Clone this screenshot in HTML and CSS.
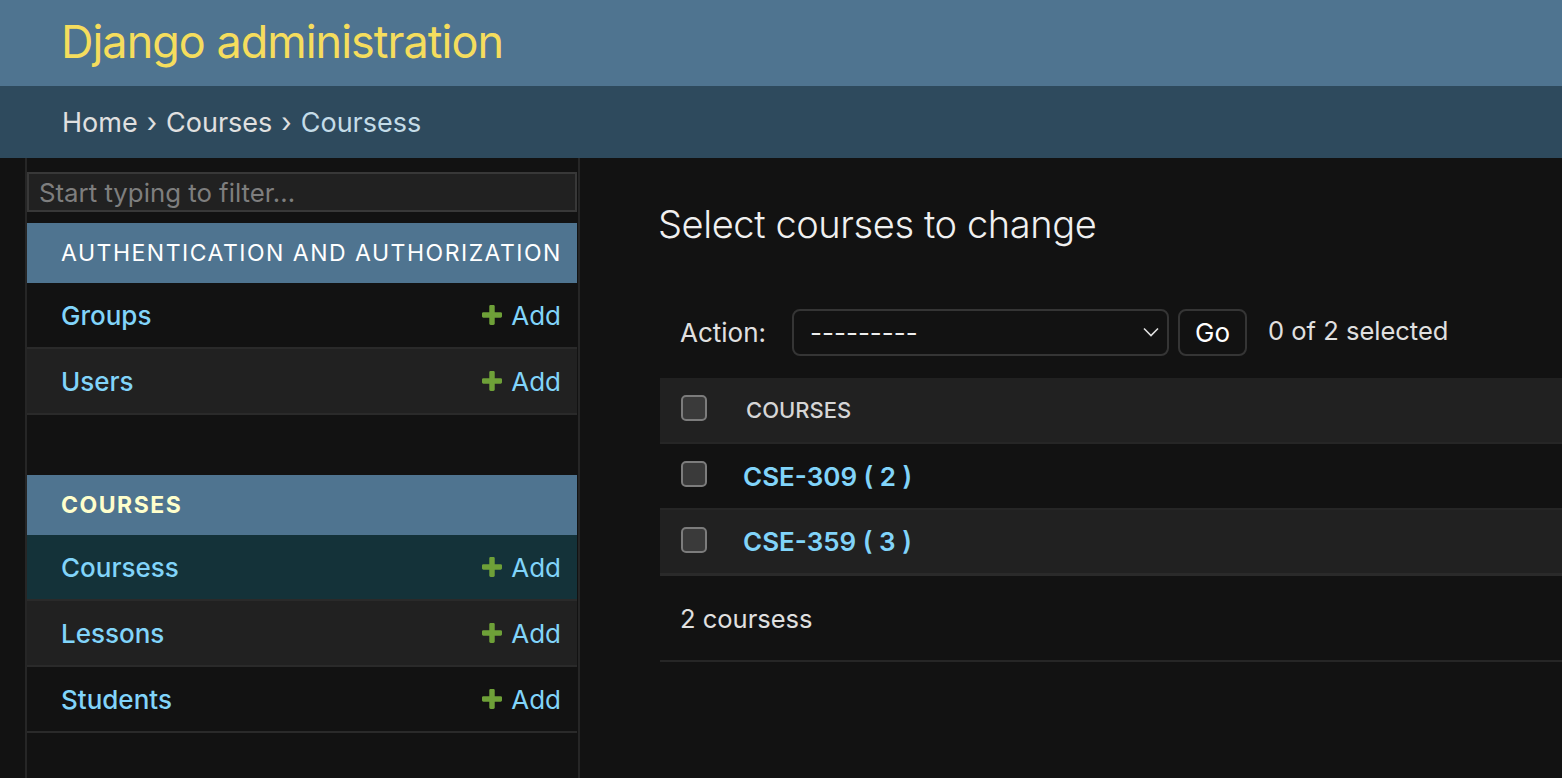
FILE: index.html
```html
<!DOCTYPE html>
<html lang="en">
<head>
<meta charset="utf-8">
<title>Select courses to change | Django site admin</title>
<link rel="stylesheet" href="styles.css">
</head>
<body>
<header class="site-header">
  <h1 class="branding">Django administration</h1>
</header>
<nav class="breadcrumbs">
  <a href="#" class="crumb-link">Home</a><span class="sep">›</span><a href="#" class="crumb-link">Courses</a><span class="sep">›</span><span class="crumb-current">Coursess</span>
</nav>
<div class="main">
  <div class="toggle-col"></div>
  <aside class="sidebar">
    <input class="filter" type="search" placeholder="Start typing to filter...">
    <section class="module">
      <div class="caption">Authentication and Authorization</div>
      <div class="row"><a class="model" href="#">Groups</a><a class="add" href="#"><svg class="plus" viewBox="192 192 1408 1408"><path d="M1600 796v192q0 40-28 68t-68 28h-416v416q0 40-28 68t-68 28h-192q-40 0-68-28t-28-68v-416h-416q-40 0-68-28t-28-68v-192q0-40 28-68t68-28h416v-416q0-40 28-68t68-28h192q40 0 68 28t28 68v416h416q40 0 68 28t28 68z"/></svg>Add</a></div>
      <div class="row alt"><a class="model" href="#">Users</a><a class="add" href="#"><svg class="plus" viewBox="192 192 1408 1408"><path d="M1600 796v192q0 40-28 68t-68 28h-416v416q0 40-28 68t-68 28h-192q-40 0-68-28t-28-68v-416h-416q-40 0-68-28t-28-68v-192q0-40 28-68t68-28h416v-416q0-40 28-68t68-28h192q40 0 68 28t28 68v416h416q40 0 68 28t28 68z"/></svg>Add</a></div>
    </section>
    <section class="module">
      <div class="caption current">Courses</div>
      <div class="row selected"><a class="model" href="#">Coursess</a><a class="add" href="#"><svg class="plus" viewBox="192 192 1408 1408"><path d="M1600 796v192q0 40-28 68t-68 28h-416v416q0 40-28 68t-68 28h-192q-40 0-68-28t-28-68v-416h-416q-40 0-68-28t-28-68v-192q0-40 28-68t68-28h416v-416q0-40 28-68t68-28h192q40 0 68 28t28 68v416h416q40 0 68 28t28 68z"/></svg>Add</a></div>
      <div class="row alt"><a class="model" href="#">Lessons</a><a class="add" href="#"><svg class="plus" viewBox="192 192 1408 1408"><path d="M1600 796v192q0 40-28 68t-68 28h-416v416q0 40-28 68t-68 28h-192q-40 0-68-28t-28-68v-416h-416q-40 0-68-28t-28-68v-192q0-40 28-68t68-28h416v-416q0-40 28-68t68-28h192q40 0 68 28t28 68v416h416q40 0 68 28t28 68z"/></svg>Add</a></div>
      <div class="row"><a class="model" href="#">Students</a><a class="add" href="#"><svg class="plus" viewBox="192 192 1408 1408"><path d="M1600 796v192q0 40-28 68t-68 28h-416v416q0 40-28 68t-68 28h-192q-40 0-68-28t-28-68v-416h-416q-40 0-68-28t-28-68v-192q0-40 28-68t68-28h416v-416q0-40 28-68t68-28h192q40 0 68 28t28 68v416h416q40 0 68 28t28 68z"/></svg>Add</a></div>
    </section>
  </aside>
  <main class="content">
    <h1 class="page-title">Select courses to change</h1>
    <div class="actions">
      <label class="action-label">Action:</label>
      <div class="select">
        <span class="select-value">---------</span>
        <svg class="chevron" viewBox="0 0 16 10"><path d="M1 1.5 L8 8.5 L15 1.5" fill="none" stroke="#e0e0e0" stroke-width="1.6"/></svg>
      </div>
      <button class="go" type="button">Go</button>
      <span class="counter">0 of 2 selected</span>
    </div>
    <div class="results">
      <div class="trow thead">
        <span class="cb-cell"><span class="checkbox"></span></span>
        <span class="col-title">Courses</span>
      </div>
      <div class="trow">
        <span class="cb-cell"><span class="checkbox"></span></span>
        <a class="item" href="#">CSE-309 ( 2 )</a>
      </div>
      <div class="trow alt last">
        <span class="cb-cell"><span class="checkbox"></span></span>
        <a class="item" href="#">CSE-359 ( 3 )</a>
      </div>
    </div>
    <p class="paginator">2 coursess</p>
  </main>
</div>
</body>
</html>
```

FILE: styles.css
```css
* { box-sizing: border-box; }

html, body {
  margin: 0;
  padding: 0;
  background: #121212;
  overflow: hidden;
}

body {
  font-family: Inter, "Noto Sans", "DejaVu Sans", sans-serif;
  color: #eeeeee;
  width: 1562px;
  height: 778px;
}

a { text-decoration: none; }

.site-header {
  height: 86px;
  background: #4f7490;
  display: flex;
  align-items: center;
  padding: 0 61px;
}

.branding {
  margin: 0;
  font-size: 45px;
  letter-spacing: -1px;
  font-weight: 400;
  color: #f5dd5d;
  line-height: 1;
  padding-bottom: 4px;
}

.breadcrumbs {
  height: 72px;
  background: #2e4a5d;
  display: flex;
  align-items: center;
  padding: 0 62px;
  font-size: 27px;
  color: #c4dce8;
}

.crumb-link { color: #e0e0e0; }
.crumb-current { color: #c4dce8; }
.sep { margin: 0 9px; color: #e0e0e0; }

.main {
  display: flex;
  height: 620px;
}

.toggle-col {
  flex: 0 0 27px;
  border-right: 2px solid #262626;
}

.sidebar {
  flex: 0 0 553px;
  border-right: 2px solid #262626;
  padding-top: 14px;
}

.filter {
  display: block;
  width: 550px;
  height: 40px;
  margin: 0 0 11px 0;
  background: #212121;
  border: 2px solid #383838;
  color: #eeeeee;
  font-family: inherit;
  font-size: 25.8px;
  padding: 0 10px;
  outline: none;
}
.filter::placeholder { color: #7e7e7e; }

.module {
  width: 550px;
  margin-bottom: 60px;
}

.caption {
  height: 60px;
  background: #4f7490;
  display: flex;
  align-items: center;
  padding-left: 34px;
  text-transform: uppercase;
  font-size: 23px;
  letter-spacing: 1.5px;
  color: #ffffff;
}
.caption.current {
  color: #ffffcc;
  font-weight: 700;
}

.row {
  height: 66px;
  border-bottom: 2px solid #2a2a2a;
  display: flex;
  align-items: center;
  justify-content: space-between;
  padding: 0 16px 0 34px;
  background: #121212;
}
.row.alt { background: #212121; }
.row.selected { background: #143239; }

.model {
  color: #81d4fa;
  font-size: 26px;
  font-weight: 500;
}

.add {
  color: #81d4fa;
  font-size: 26px;
  display: flex;
  align-items: center;
}

.plus {
  width: 20px;
  height: 20px;
  fill: #6ea038;
  margin-right: 9px;
}

.content {
  flex: 1;
  padding: 40px 0 0 80px;
  min-width: 0;
}

.page-title {
  margin: 0 0 36px -2px;
  font-size: 38px;
  letter-spacing: -0.4px;
  font-weight: 300;
  line-height: 52px;
  color: #f0f0f0;
}

.actions {
  display: flex;
  align-items: center;
  height: 92px;
  padding: 0 20px;
  color: #e0e0e0;
  font-size: 26px;
}

.action-label { margin-right: 26px; }

.select {
  width: 377px;
  height: 47px;
  border: 2px solid #353535;
  border-radius: 8px;
  display: flex;
  align-items: center;
  justify-content: space-between;
  padding: 0 8px 0 16px;
  color: #eeeeee;
}

.chevron { width: 16px; height: 10px; }

.go {
  margin-left: 9px;
  width: 69px;
  height: 47px;
  border: 2px solid #353535;
  border-radius: 8px;
  background: #121212;
  color: #ffffff;
  font-family: inherit;
  font-size: 26px;
  padding: 0;
}

.counter {
  margin-left: 21px;
  margin-top: -4px;
  font-size: 25.5px;
}

.results { width: 100%; }

.trow {
  display: flex;
  align-items: center;
  height: 66px;
  border-bottom: 2px solid #262626;
  background: #121212;
}
.trow.thead { background: #212121; }
.trow.alt { background: #212121; }
.trow.last { border-bottom: 3px solid #2a2a2a; }

.cb-cell {
  width: 83px;
  padding-left: 21px;
  display: flex;
  align-items: center;
  align-self: flex-start;
  padding-top: 17px;
}

.checkbox {
  width: 26px;
  height: 26px;
  border: 2px solid #7c7c7c;
  border-radius: 5px;
  background: #3a3a3a;
}

.col-title {
  font-size: 22px;
  text-transform: uppercase;
  color: #d6d6d6;
  font-weight: 500;
  margin-left: 3px;
}

.item {
  color: #81d4fa;
  font-size: 26px;
  font-weight: 600;
}

.paginator {
  margin: 0;
  height: 86px;
  display: flex;
  align-items: center;
  padding-left: 20px;
  font-size: 25.5px;
  color: #e0e0e0;
  border-bottom: 2px solid #262626;
}
```
